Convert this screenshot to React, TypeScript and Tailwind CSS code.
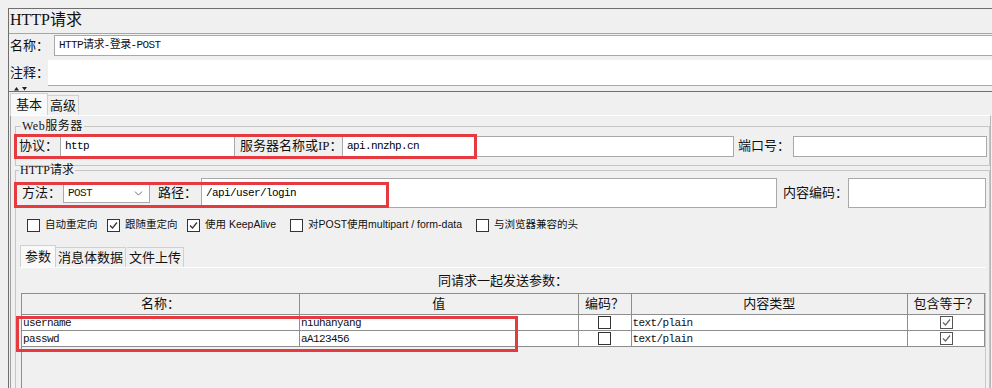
import React from 'react';
import { ChevronDown } from 'lucide-react';

const ui = "font-['Liberation_Serif','Noto_Sans_CJK_SC',serif]";
const mono = "font-['Liberation_Mono','Noto_Sans_CJK_SC',monospace]";

function Box({ checked, soft }: { checked?: boolean; soft?: boolean }) {
  return (
    <div className={`w-[13px] h-[13px] shrink-0 bg-white border flex items-center justify-center ${soft ? 'border-[#555]' : 'border-[#333]'}`}>
      {checked && (
        <svg width="11" height="11" viewBox="0 0 11 11">
          <path d="M2 5.5 L4.5 8 L9 2.5" fill="none" stroke={soft ? '#666' : '#333'} strokeWidth="1.2" />
        </svg>
      )}
    </div>
  );
}

function Field({ w, h = 'h-[21px]', children }: { w: string; h?: string; children?: React.ReactNode }) {
  return (
    <div className={`${w} ${h} shrink-0 bg-white border border-[#a9a9a9] flex items-center pl-[4px] text-[11px] tracking-[-0.6px] text-black ${mono}`}>
      {children}
    </div>
  );
}

function Label({ w, pl = 'pl-0', children }: { w: string; pl?: string; children: React.ReactNode }) {
  return <div className={`${w} ${pl} shrink-0 text-[13px] leading-[16px] whitespace-nowrap`}>{children}</div>;
}

const cols = ['w-[278px]', 'w-[279px]', 'w-[53px]', 'w-[277px]', 'w-[77px]'];

const params = [
  { name: 'username', value: 'niuhanyang' },
  { name: 'passwd', value: 'aA123456' },
];

export default function App() {
  return (
    <div className={`relative w-[992px] h-[388px] overflow-hidden bg-[#f0f0f0] pt-2 pl-2 text-[#111] ${ui}`}>
      <div className="h-[380px] border-l border-t border-[#6f6f6f]">
        {/* Title */}
        <div className="h-[24px] text-[16px] leading-[22px] pl-px">HTTP请求</div>

        {/* Name */}
        <div className="h-[24px] border-t border-[#a5a5a5] flex items-center pl-[1px]">
          <Label w="w-[44px]">名称：</Label>
          <div className="flex-1 h-[21px] bg-white border border-[#a9a9a9] border-r-0 flex items-center pl-[4px] text-[11px]">
            <span className={`${mono} tracking-[-0.6px]`}>HTTP请求-登录-POST</span>
          </div>
        </div>

        {/* Comment */}
        <div className="h-[29px] flex items-end pl-[1px]">
          <Label w="w-[38px]">
            <span className="block pb-[5px]">注释：</span>
          </Label>
          <div className="flex-1 h-[26px] bg-white border-b border-[#a9a9a9]" />
        </div>

        {/* Splitter */}
        <div className="h-[6px] border-b border-[#6f6f6f] pl-[3px]">
          <svg width="18" height="5" viewBox="0 0 18 5">
            <path d="M2 4.5 L4.5 1 L7 4.5 Z" fill="#222" />
            <path d="M10 1 L15 1 L12.5 4.5 Z" fill="#222" />
          </svg>
        </div>

        {/* Tabs */}
        <div className="h-[23px] flex items-end pl-[1px] text-[13px]">
          <div className="w-[38px] h-[22px] bg-[#f9f9f9] border border-b-0 border-[#d0d0d0] flex items-center justify-center">基本</div>
          <div className="w-[31px] h-[20px] bg-[#f0f0f0] border border-b-0 border-l-0 border-[#d0d0d0] flex items-center justify-center">高级</div>
        </div>

        {/* Tab panel */}
        <div className="ml-px w-[981px] h-[273px] border-l border-r border-t border-l-[#a0a0a0] border-r-[#b5b5b5] border-t-white pl-[4px] pt-[3px]">
          <fieldset className="border border-[#c6c6c6] pt-[2px] pb-[8px] pl-[2px]">
            <legend className="ml-[3px] px-px text-[12px] leading-[14px] tracking-[0.5px]">Web服务器</legend>
            <div className="h-[22px] flex items-center">
              <Label w="w-[42px]" pl="pl-[1px]">协议：</Label>
              <Field w="w-[175px]">http</Field>
              <Label w="w-[107px]" pl="pl-[5px]">服务器名称或IP：</Label>
              <Field w="w-[392px]">api.nnzhp.cn</Field>
              <Label w="w-[59px]" pl="pl-[4px]">端口号：</Label>
              <Field w="w-[194px]" />
            </div>
          </fieldset>

          <fieldset className="border border-[#c6c6c6] border-b-0 h-[226px]">
            <legend className="ml-[3px] px-px text-[12px] leading-[8px]">HTTP请求</legend>
            <div className="mt-[4px] h-[30px] flex items-center">
              <Label w="w-[47px]" pl="pl-[6px]">方法：</Label>
              <div className={`w-[87px] h-[20px] shrink-0 bg-white border border-[#a9a9a9] flex items-center justify-between pl-[4px] pr-[4px] text-[11px] tracking-[-0.6px] ${mono}`}>
                <span>POST</span>
                <ChevronDown size={13} strokeWidth={1.4} className="text-[#444]" />
              </div>
              <Label w="w-[51px]" pl="pl-[8px]">路径：</Label>
              <Field w="w-[576px]" h="h-[30px]">/api/user/login</Field>
              <Label w="w-[71px]" pl="pl-[6px]">内容编码：</Label>
              <Field w="w-[138px]" h="h-[30px]" />
            </div>

            {/* Options */}
            <div className="mt-[10px] h-[14px] flex items-center pl-[11px] text-[10.5px] font-['Liberation_Sans','Noto_Sans_CJK_SC',sans-serif]">
              <div className="w-[80px] flex items-center gap-[5px]"><Box />自动重定向</div>
              <div className="w-[80px] flex items-center gap-[5px]"><Box checked />跟随重定向</div>
              <div className="w-[103px] flex items-center gap-[5px]"><Box checked />使用 KeepAlive</div>
              <div className="w-[186px] flex items-center gap-[5px]"><Box />对POST使用multipart / form-data</div>
              <div className="flex items-center gap-[5px]"><Box />与浏览器兼容的头</div>
            </div>

            {/* Sub tabs */}
            <div className="mt-[13px] h-[22px] flex items-end pl-[4px] text-[13px]">
              <div className="w-[36px] h-[22px] bg-[#f9f9f9] border border-b-0 border-[#d0d0d0] flex items-center justify-center">参数</div>
              <div className="w-[70px] h-[20px] border border-b-0 border-l-0 border-[#d0d0d0] flex items-center justify-center">消息体数据</div>
              <div className="w-[57px] h-[20px] ml-px border border-b-0 border-l-0 border-[#d0d0d0] flex items-center justify-center">文件上传</div>
            </div>

            <div className="ml-[4px] w-[966px] border-t border-white">
              <div className="h-[25px] flex items-center justify-center text-[13px]">同请求一起发送参数：</div>
              <div className="ml-px w-[965px] h-[100px] border-l border-r border-t border-[#8e8e8e] border-r-[#c8c8c8]">
                <table className="border-collapse table-fixed text-[13px]">
                  <thead>
                    <tr className="h-[20px]">
                      {['名称：', '值', '编码？', '内容类型', '包含等于？'].map((h, i) => (
                        <th key={h} className={`${cols[i]} p-0 font-normal bg-[#f0f0f0] border-r border-b border-[#8e8e8e] leading-[18px] text-center`}>
                          {h}
                        </th>
                      ))}
                    </tr>
                  </thead>
                  <tbody className={`text-[11px] tracking-[-0.6px] ${mono}`}>
                    {params.map((p) => (
                      <tr key={p.name} className="h-[16px] bg-white">
                        <td className="p-0 pl-px pt-[2px] border-r border-b border-[#8e8e8e] leading-[13px]">{p.name}</td>
                        <td className="p-0 pl-px pt-[2px] border-r border-b border-[#8e8e8e] leading-[13px]">{p.value}</td>
                        <td className="p-0 border-r border-b border-[#8e8e8e]">
                          <div className="flex justify-center"><Box /></div>
                        </td>
                        <td className="p-0 pl-px pt-[2px] border-r border-b border-[#8e8e8e] leading-[13px]">text/plain</td>
                        <td className="p-0 border-r border-b border-[#8e8e8e]">
                          <div className="flex justify-center"><Box checked soft /></div>
                        </td>
                      </tr>
                    ))}
                  </tbody>
                </table>
              </div>
            </div>
          </fieldset>
        </div>
      </div>

      {/* Red annotation boxes */}
      <div className="absolute left-[14px] top-[134px] w-[463px] h-[25px] border-[3px] border-[#e53a3f]" />
      <div className="absolute left-[14px] top-[182px] w-[375px] h-[26px] border-[3px] border-[#e53a3f]" />
      <div className="absolute left-[16px] top-[316px] w-[502px] h-[36px] border-[3px] border-[#e53a3f]" />
    </div>
  );
}
